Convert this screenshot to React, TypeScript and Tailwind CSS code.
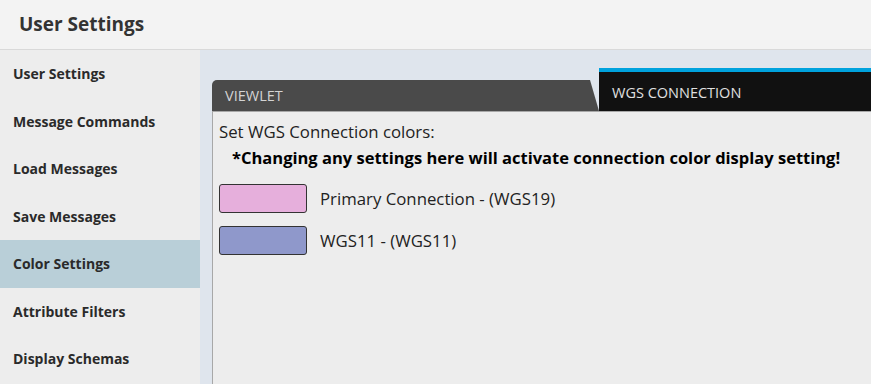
import { useState } from "react";

const MENU = [
  "User Settings",
  "Message Commands",
  "Load Messages",
  "Save Messages",
  "Color Settings",
  "Attribute Filters",
  "Display Schemas",
];

const CONNECTIONS = [
  { label: "Primary Connection - (WGS19)", color: "bg-[#e6afdc]" },
  { label: "WGS11 - (WGS11)", color: "bg-[#8f98cb]" },
];

export default function App() {
  const [active, setActive] = useState("Color Settings");
  const [tab, setTab] = useState<"viewlet" | "wgs">("wgs");

  return (
    <div className="flex h-[384px] w-[871px] flex-col overflow-hidden font-['Open_Sans',sans-serif] text-[#222]">
      {/* header */}
      <div className="flex h-[50px] shrink-0 items-center border-b border-[#d9d9d9] bg-[#f3f3f3] pl-[19px]">
        <h1 className="text-[19px] font-bold text-[#333]">User Settings</h1>
      </div>

      <div className="flex min-h-0 flex-1">
        {/* sidebar */}
        <nav className="flex w-[200px] shrink-0 flex-col bg-[#ededed]">
          {MENU.map((item) => (
            <button
              key={item}
              onClick={() => setActive(item)}
              className={`flex h-[47.5px] shrink-0 items-center pl-[13px] text-left text-[14px] font-bold text-[#2a2a2a] ${
                active === item ? "bg-[#b9cfd8]" : ""
              }`}
            >
              {item}
            </button>
          ))}
        </nav>

        {/* main */}
        <main className="flex flex-1 flex-col bg-[#dfe5ed] pl-[12px] pt-[19px]">
          <div className="flex h-[43px] shrink-0 items-end border-b border-[#a8a8a8]">
            <button
              onClick={() => setTab("viewlet")}
              className="flex h-[31px] w-[387px] items-center rounded-tl-[5px] bg-[#4a4a4a] pl-[13px] pt-[1px] text-[14.5px] text-[#d4d4d4] [clip-path:polygon(0_0,378px_0,387px_100%,0_100%)]"
            >
              VIEWLET
            </button>
            <button
              onClick={() => setTab("wgs")}
              className="flex h-[43px] flex-1 items-center border-t-[4px] border-[#00a2dd] bg-[#111] pl-[13px] pt-[2px] text-[14.5px] text-[#e0e0e0]"
            >
              WGS CONNECTION
            </button>
          </div>

          <section className="flex-1 border-l border-[#a8a8a8] bg-[#ededed] pl-[6px] pt-[8px]">
            <p className="text-[16.8px] leading-[24px]">Set WGS Connection colors:</p>
            <p className="pl-[13px] text-[16.5px] font-bold leading-[28px] text-black">
              *Changing any settings here will activate connection color display setting!
            </p>
            <div className="mt-[12px] flex flex-col gap-[13px]">
              {CONNECTIONS.map((c) => (
                <div key={c.label} className="flex items-center gap-[13px]">
                  <div className={`h-[29px] w-[88px] rounded-[3px] border border-[#333] ${c.color}`} />
                  <span className="text-[16.8px]">{c.label}</span>
                </div>
              ))}
            </div>
          </section>
        </main>
      </div>
    </div>
  );
}
